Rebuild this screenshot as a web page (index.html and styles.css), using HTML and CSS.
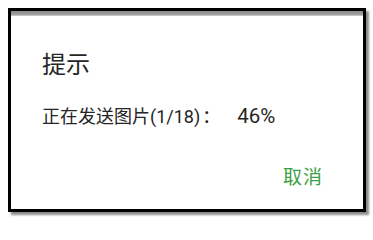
FILE: index.html
```html
<!DOCTYPE html>
<html lang="zh-CN">
<head>
<meta charset="utf-8">
<title>提示</title>
<link rel="stylesheet" href="styles.css">
</head>
<body>
<div class="frame">
  <div class="band"></div>
  <div class="dialog">
    <h1 class="title">提示</h1>
    <p class="message">正在发送图片(1/18)<span class="colon">：</span><span class="pct">46%</span></p>
    <div class="actions">
      <span class="btn">取消</span>
    </div>
  </div>
</div>
</body>
</html>
```
FILE: styles.css
```css
html, body {
  margin: 0;
  padding: 0;
  background: #ffffff;
}
body {
  width: 373px;
  height: 223px;
  overflow: hidden;
  font-family: Roboto, "Noto Sans CJK SC", sans-serif;
}
.frame {
  margin: 8px 0 0 8px;
  width: 352px;
  height: 198px;
  border: 3px solid #000;
  background: #fff;
  box-shadow: 3px 3px 2px rgba(0, 0, 0, 0.45);
  display: flex;
  flex-direction: column;
}
.band {
  height: 5px;
  background: linear-gradient(#888888, #a0a0a0 70%, #d4d4d4);
}
.dialog {
  flex: 1;
  display: flex;
  flex-direction: column;
  padding: 33px 40px 0 31px;
}
.title {
  margin: 0;
  font-size: 24px;
  line-height: 32px;
  font-weight: normal;
  color: #262626;
}
.message {
  margin: 22px 0 0 0;
  font-size: 18px;
  line-height: 24px;
  color: #262626;
}
.colon {
  font-family: "Noto Sans CJK TC", sans-serif;
  margin: 0 4px 0 2px;
}
.pct {
  margin-left: 13px;
  font-size: 20.5px;
}
.actions {
  margin-top: 37px;
  display: flex;
  justify-content: flex-end;
}
.btn {
  font-size: 19px;
  line-height: 24px;
  letter-spacing: 1px;
  color: #3d9f45;
}
```
